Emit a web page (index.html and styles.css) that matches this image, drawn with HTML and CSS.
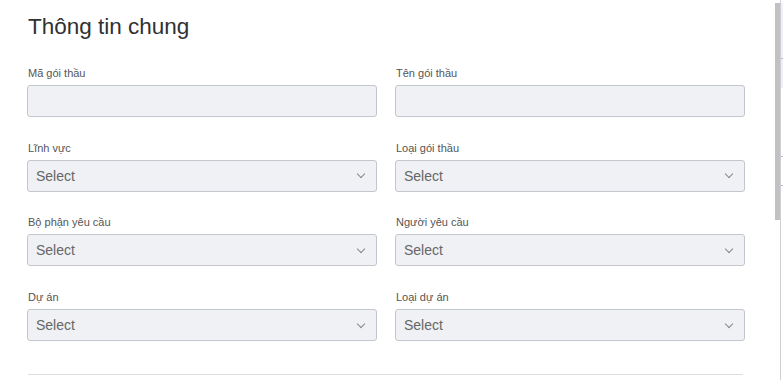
FILE: index.html
```html
<!DOCTYPE html>
<html lang="vi">
<head>
    <meta charset="UTF-8">
    <meta name="viewport" content="width=device-width, initial-scale=1.0">
    <title>Thông tin chung</title>
    <link rel="stylesheet" href="styles.css">
</head>
<body>

<div class="page">
    <div class="form-panel">
        <h1 class="title">Thông tin chung</h1>

        <div class="fields">
            <div class="field">
                <label>Mã gói thầu</label>
                <div class="input"></div>
            </div>
            <div class="field">
                <label>Tên gói thầu</label>
                <div class="input"></div>
            </div>

            <div class="field">
                <label>Lĩnh vực</label>
                <div class="input select"><span>Select</span><span class="chevron"></span></div>
            </div>
            <div class="field">
                <label>Loại gói thầu</label>
                <div class="input select"><span>Select</span><span class="chevron"></span></div>
            </div>

            <div class="field">
                <label>Bộ phận yêu cầu</label>
                <div class="input select"><span>Select</span><span class="chevron"></span></div>
            </div>
            <div class="field">
                <label>Người yêu cầu</label>
                <div class="input select"><span>Select</span><span class="chevron"></span></div>
            </div>

            <div class="field">
                <label>Dự án</label>
                <div class="input select"><span>Select</span><span class="chevron"></span></div>
            </div>
            <div class="field">
                <label>Loại dự án</label>
                <div class="input select"><span>Select</span><span class="chevron"></span></div>
            </div>
        </div>

        <div class="divider"></div>
    </div>

    <div class="scrollbar"><div class="thumb"></div></div>

    <div class="edge">
        <div class="edge-top"></div>
        <div class="tick t1"></div>
        <div class="tick t2"></div>
        <div class="tick t3"></div>
    </div>
</div>

</body>
</html>
```

FILE: styles.css
```css
body {
    margin: 0;
    font-family: "Liberation Sans", Arial, sans-serif;
    background-color: #fff;
    color: #333;
}
.page {
    display: flex;
    height: 380px;
    overflow: hidden;
}
.form-panel {
    flex: 1;
    padding-left: 27px;
}
.title {
    margin: 13px 0 0 1px;
    font-size: 22.5px;
    font-weight: 400;
    line-height: 28px;
    color: #303133;
}
.fields {
    display: grid;
    grid-template-columns: 350px 350px;
    column-gap: 18px;
    row-gap: 23.7px;
    margin-top: 25px;
}
.field label {
    display: block;
    font-size: 11px;
    line-height: 14px;
    margin: 0 0 5px 1px;
    color: #555;
}
.input {
    box-sizing: border-box;
    height: 32px;
    background-color: #f0f1f4;
    border: 1px solid #c4c6cd;
    border-radius: 3px;
}
.select {
    display: flex;
    align-items: center;
    justify-content: space-between;
    padding: 0 12px 0 8px;
    font-size: 14px;
    color: #666;
}
.chevron {
    width: 5px;
    height: 5px;
    border-right: 1px solid #888;
    border-bottom: 1px solid #888;
    transform: rotate(45deg);
    margin-top: -3px;
}
.divider {
    height: 1px;
    width: 715px;
    margin: 33px 0 0 1px;
    background-color: #dcdcdc;
}
.scrollbar {
    width: 5px;
}
.thumb {
    margin-top: 3px;
    height: 217px;
    background-color: #c1c1c1;
}
.edge {
    width: 2px;
    border-left: 1px solid #cfd0d6;
}
.edge-top {
    margin-top: 3px;
    height: 85px;
    background-color: #eef0f5;
}
.tick {
    height: 1px;
    background-color: #b8bac2;
}
.t1 {
    margin-top: -30px;
}
.t2 {
    margin-top: 97px;
}
.t3 {
    margin-top: 28px;
}
```
